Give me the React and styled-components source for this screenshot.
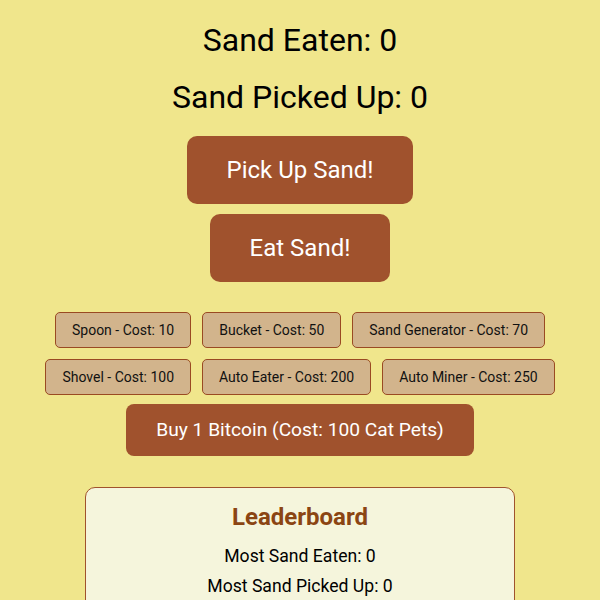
import React, { useState } from "react";
import styled, { createGlobalStyle } from "styled-components";

const GlobalStyle = createGlobalStyle`
  body {
    margin: 0;
    background: #f0e68c;
    font-family: Roboto, "Liberation Sans", sans-serif;
    color: #000;
  }
`;

const shopItems = [
  { name: "Spoon", cost: 10 },
  { name: "Bucket", cost: 50 },
  { name: "Sand Generator", cost: 70 },
  { name: "Shovel", cost: 100 },
  { name: "Auto Eater", cost: 200 },
  { name: "Auto Miner", cost: 250 },
];

const App = () => {
  const [eaten, setEaten] = useState(0);
  const [picked, setPicked] = useState(0);
  const [best] = useState({ eaten: 0, picked: 0 });

  const eatSand = () => {
    if (picked > 0) {
      setPicked(picked - 1);
      setEaten(eaten + 1);
    }
  };

  return (
    <>
      <GlobalStyle />
      <Page>
        <Stat>Sand Eaten: {eaten}</Stat>
        <Stat>Sand Picked Up: {picked}</Stat>
        <BigButton onClick={() => setPicked(picked + 1)}>Pick Up Sand!</BigButton>
        <BigButton $gap={30} onClick={eatSand}>
          Eat Sand!
        </BigButton>

        <Shop>
          {shopItems.map((item) => (
            <ShopButton key={item.name}>
              {item.name} - Cost: {item.cost}
            </ShopButton>
          ))}
        </Shop>

        <BitcoinButton>Buy 1 Bitcoin (Cost: 100 Cat Pets)</BitcoinButton>

        <Leaderboard>
          <BoardTitle>Leaderboard</BoardTitle>
          <BoardLine>Most Sand Eaten: {best.eaten}</BoardLine>
          <BoardLine>Most Sand Picked Up: {best.picked}</BoardLine>
        </Leaderboard>
      </Page>
    </>
  );
};

const Page = styled.div`
  display: flex;
  flex-direction: column;
  align-items: center;
  padding: 21px 8px 0;
  text-align: center;
`;

const Stat = styled.p`
  margin: 0 0 19px;
  font-size: 32px;
  line-height: 38px;
  font-weight: 400;

  & + & {
    margin-bottom: 20px;
  }
`;

const BigButton = styled.button`
  margin: 0 0 ${(p) => p.$gap || 10}px;
  padding: 20px 40px;
  border: none;
  border-radius: 10px;
  background: #a0522d;
  color: #fff;
  font-family: inherit;
  font-size: 24px;
  line-height: 28px;
  cursor: pointer;
`;

const Shop = styled.div`
  display: flex;
  flex-wrap: wrap;
  justify-content: center;
  gap: 11px;
  max-width: 584px;
  margin-bottom: 9px;
`;

const ShopButton = styled.button`
  padding: 9px 16px;
  border: 1px solid #9a4a22;
  border-radius: 5px;
  background: #d2b48c;
  color: #111;
  font-family: inherit;
  font-size: 14px;
  line-height: 16px;
  cursor: pointer;
`;

const BitcoinButton = styled.button`
  margin-bottom: 31px;
  padding: 14px 30px;
  border: none;
  border-radius: 8px;
  background: #a0522d;
  color: #fff;
  font-family: inherit;
  font-size: 19.2px;
  line-height: 24px;
  cursor: pointer;
`;

const Leaderboard = styled.div`
  box-sizing: border-box;
  width: 430px;
  padding: 15px;
  border: 1px solid #a0522d;
  border-radius: 10px;
  background: #f5f5dc;
`;

const BoardTitle = styled.h2`
  margin: 0 0 15px;
  font-size: 24px;
  line-height: 28px;
  color: #8b4513;
`;

const BoardLine = styled.p`
  margin: 0 0 9px;
  font-size: 17.6px;
  line-height: 21px;
`;

export default App;
